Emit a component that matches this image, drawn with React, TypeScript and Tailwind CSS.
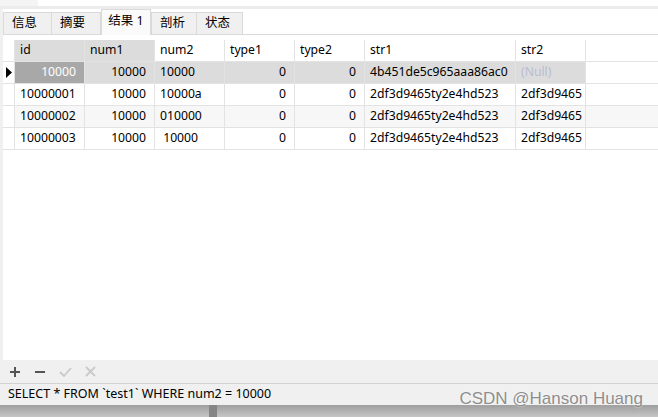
import React from "react";

const cols = [
  { name: "id", w: "w-[70px]" },
  { name: "num1", w: "w-[70px]" },
  { name: "num2", w: "w-[70px]" },
  { name: "type1", w: "w-[70px]" },
  { name: "type2", w: "w-[70px]" },
  { name: "str1", w: "w-[151px]" },
  { name: "str2", w: "w-[70px]" },
];

const rows = [
  ["10000001", "10000", "10000a", "0", "0", "2df3d9465ty2e4hd523", "2df3d9465"],
  ["10000002", "10000", "010000", "0", "0", "2df3d9465ty2e4hd523", "2df3d9465"],
  ["10000003", "10000", "\u00a010000", "0", "0", "2df3d9465ty2e4hd523", "2df3d9465"],
];

const rightAligned = [false, true, false, true, true, false, false];

const tabs = ["信息", "摘要", "结果 1", "剖析", "状态"];

const App = () => {
  return (
    <div
      className="relative flex h-[417px] w-[658px] flex-col overflow-hidden bg-[#f0f0f0] text-[12.2px] text-[#000]"
      style={{ fontFamily: '"Noto Sans", "Noto Sans CJK SC", sans-serif' }}
    >
      {/* top strip */}
      <div className="flex h-[6px] shrink-0">
        <div className="w-[38px] bg-[#f4f4f4]" />
        <div className="flex-1 bg-white" />
      </div>
      <div className="h-[3px] shrink-0 bg-[#ececec]" />

      <div className="flex min-h-0 flex-1 pl-[3px]">
        <div className="flex flex-1 flex-col bg-white">
          {/* tabs */}
          <div className="flex h-[26px] shrink-0 items-end border-b border-[#dadada] text-[12.5px]">
            {tabs.map((t, i) =>
              i === 2 ? (
                <div
                  key={t}
                  className="-mb-px flex h-[26px] w-[50px] items-center justify-center border border-b-0 border-[#dadada] bg-[#fafafa] pb-[2px]"
                >
                  {t}
                </div>
              ) : (
                <div
                  key={t}
                  className={`flex h-[22px] items-center border border-b-0 border-[#dadada] bg-[#f0f0f0] pl-[8px] ${
                    i < 2 ? "w-[49px]" : "w-[46px]"
                  } ${i === 1 || i === 4 ? "border-l-0" : ""}`}
                >
                  {t}
                </div>
              )
            )}
          </div>

          {/* grid */}
          <div className="mt-[5px] flex flex-col">
            <div className="flex h-[22px] border-b border-[#e3e3e3]">
              <div className="w-[12px] border-r border-[#e3e3e3]" />
              {cols.map((c, i) => (
                <div
                  key={c.name}
                  className={`${c.w} flex items-center border-r border-[#e3e3e3] px-[5px] ${
                    i < 2 ? "bg-[#dcdcdc]" : "bg-white"
                  }`}
                >
                  {c.name}
                </div>
              ))}
            </div>

            {/* selected row */}
            <div className="flex h-[22px] border-b border-[#e3e3e3]">
              <div className="flex w-[12px] items-center justify-center border-r border-[#e3e3e3]">
                <svg width="6" height="11" viewBox="0 0 6 11">
                  <path d="M0 0 L6 5.5 L0 11 Z" fill="#000" />
                </svg>
              </div>
              <div className="flex w-[70px] items-center justify-end border-r border-[#e3e3e3] bg-[#a8a8a8] px-[8px] text-white">
                10000
              </div>
              <div className="flex w-[70px] items-center justify-end border-r border-[#e3e3e3] bg-[#dcdcdc] px-[8px]">
                10000
              </div>
              <div className="flex w-[70px] items-center border-r border-[#e3e3e3] bg-[#dcdcdc] px-[5px]">
                10000
              </div>
              <div className="flex w-[70px] items-center justify-end border-r border-[#e3e3e3] bg-[#dcdcdc] px-[8px]">
                0
              </div>
              <div className="flex w-[70px] items-center justify-end border-r border-[#e3e3e3] bg-[#dcdcdc] px-[8px]">
                0
              </div>
              <div className="flex w-[151px] items-center border-r border-[#e3e3e3] bg-[#dcdcdc] px-[5px]">
                4b451de5c965aaa86ac0
              </div>
              <div className="flex w-[70px] items-center border-r border-[#e3e3e3] bg-[#dcdcdc] px-[5px] text-[#b9bdd0]">
                (Null)
              </div>
            </div>

            {rows.map((r, ri) => (
              <div
                key={ri}
                className={`flex h-[22px] border-b border-[#e3e3e3] ${ri === 1 ? "bg-[#f7f7f7]" : "bg-white"}`}
              >
                <div className="w-[12px] border-r border-[#e3e3e3] bg-white" />
                {r.map((v, ci) => (
                  <div
                    key={ci}
                    className={`${cols[ci].w} flex items-center whitespace-nowrap border-r border-[#e3e3e3] ${
                      rightAligned[ci] ? "justify-end px-[8px]" : "pl-[5px]"
                    }`}
                  >
                    {v}
                  </div>
                ))}
              </div>
            ))}
          </div>
        </div>
      </div>

      {/* toolbar */}
      <div className="flex h-[23px] shrink-0 items-center gap-[13px] pl-[9px]">
        <svg width="12" height="12" viewBox="0 0 12 12">
          <path d="M6 1 V11 M1 6 H11" stroke="#555" strokeWidth="2" />
        </svg>
        <svg width="12" height="12" viewBox="0 0 12 12">
          <path d="M1 6 H11" stroke="#555" strokeWidth="2" />
        </svg>
        <svg width="13" height="12" viewBox="0 0 13 12">
          <path d="M1 6 L5 10 L12 2" stroke="#c9c9c9" strokeWidth="1.8" fill="none" />
        </svg>
        <svg width="11" height="11" viewBox="0 0 11 11">
          <path d="M1 1 L10 10 M10 1 L1 10" stroke="#c9c9c9" strokeWidth="1.8" />
        </svg>
      </div>
      <div className="h-px shrink-0 bg-[#d2d2d2]" />

      {/* status bar */}
      <div className="flex h-[21px] shrink-0 items-center pl-[8px] text-[12.5px]">
        SELECT * FROM `test1` WHERE num2 = 10000
      </div>

      {/* bottom strip */}
      <div className="flex h-[12px] shrink-0 bg-gradient-to-b from-[#9e9e9e] to-[#c6c6c6]">
        <div className="ml-[209px] w-[8px] bg-[#858585]" />
      </div>

      <div
        className="absolute right-[15px] top-[386px] text-[17px] text-[#8e8e8e]"
        style={{ fontFamily: '"Liberation Sans", sans-serif', textShadow: "0 0 2px #fff" }}
      >
        CSDN @Hanson Huang
      </div>
    </div>
  );
};

export default App;
